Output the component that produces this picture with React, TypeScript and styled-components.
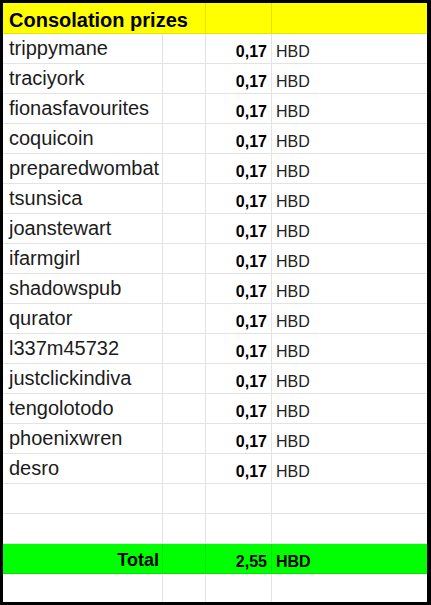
import React from "react";
import styled, { createGlobalStyle } from "styled-components";

const Global = createGlobalStyle`
  html, body { margin: 0; padding: 0; background: #fff; }
  body { font-family: "Liberation Sans", Arial, sans-serif; }
`;

const Sheet = styled.div`
  box-sizing: border-box;
  width: 431px;
  height: 605px;
  border-style: solid;
  border-color: #000;
  border-width: 3px 4px 3px 3px;
  display: grid;
  grid-template-columns: 160px 43px 66px 155px;
  grid-template-rows: 31px repeat(18, 30px) 28px;
  background: #fff;
  color: #1c1c1c;
`;

const Cell = styled.div<{ $bg?: string; $last?: boolean; $noRight?: boolean }>`
  box-sizing: border-box;
  background: ${(p) => p.$bg || "transparent"};
  border-right: ${(p) => (p.$noRight ? "none" : "1px solid rgba(0,0,0,0.11)")};
  border-bottom: ${(p) => (p.$last ? "none" : "1px solid rgba(0,0,0,0.11)")};
  white-space: nowrap;
  overflow: visible;
`;

const HeaderCell = styled(Cell)`
  grid-column: span 2;
  font-size: 20px;
  line-height: 20px;
  font-weight: 700;
  color: #000;
  padding: 7px 0 0 6px;
`;

const NameCell = styled(Cell)`
  font-size: 20px;
  line-height: 20px;
  padding: 4px 0 0 6px;
`;

const AmountCell = styled(Cell)`
  font-size: 16px;
  line-height: 16px;
  font-weight: 700;
  color: #000;
  text-align: right;
  padding: 10px 4px 0 0;
`;

const UnitCell = styled(Cell)<{ $strong?: boolean }>`
  font-size: 16px;
  line-height: 16px;
  font-weight: ${(p) => (p.$strong ? 700 : 400)};
  color: ${(p) => (p.$strong ? "#000" : "#222")};
  padding: 10px 0 0 4px;
`;

const TotalLabel = styled(Cell)`
  font-size: 18px;
  line-height: 18px;
  font-weight: 700;
  color: #000;
  text-align: right;
  padding: 7px 3px 0 0;
`;

const names = [
  "trippymane",
  "traciyork",
  "fionasfavourites",
  "coquicoin",
  "preparedwombat",
  "tsunsica",
  "joanstewart",
  "ifarmgirl",
  "shadowspub",
  "qurator",
  "l337m45732",
  "justclickindiva",
  "tengolotodo",
  "phoenixwren",
  "desro",
];

const YELLOW = "#ffff00";
const GREEN = "#00ff00";

export default function App() {
  return (
    <>
      <Global />
      <Sheet>
        <HeaderCell $bg={YELLOW}>Consolation prizes</HeaderCell>
        <Cell $bg={YELLOW} />
        <Cell $bg={YELLOW} $noRight />

        {names.map((n) => (
          <React.Fragment key={n}>
            <NameCell>{n}</NameCell>
            <Cell />
            <AmountCell>0,17</AmountCell>
            <UnitCell $noRight>HBD</UnitCell>
          </React.Fragment>
        ))}

        {[0, 1].map((i) => (
          <React.Fragment key={"e" + i}>
            <Cell />
            <Cell />
            <Cell />
            <Cell $noRight />
          </React.Fragment>
        ))}

        <TotalLabel $bg={GREEN}>Total</TotalLabel>
        <Cell $bg={GREEN} />
        <AmountCell $bg={GREEN}>2,55</AmountCell>
        <UnitCell $bg={GREEN} $strong $noRight>HBD</UnitCell>

        <Cell $last />
        <Cell $last />
        <Cell $last />
        <Cell $last $noRight />
      </Sheet>
    </>
  );
}
